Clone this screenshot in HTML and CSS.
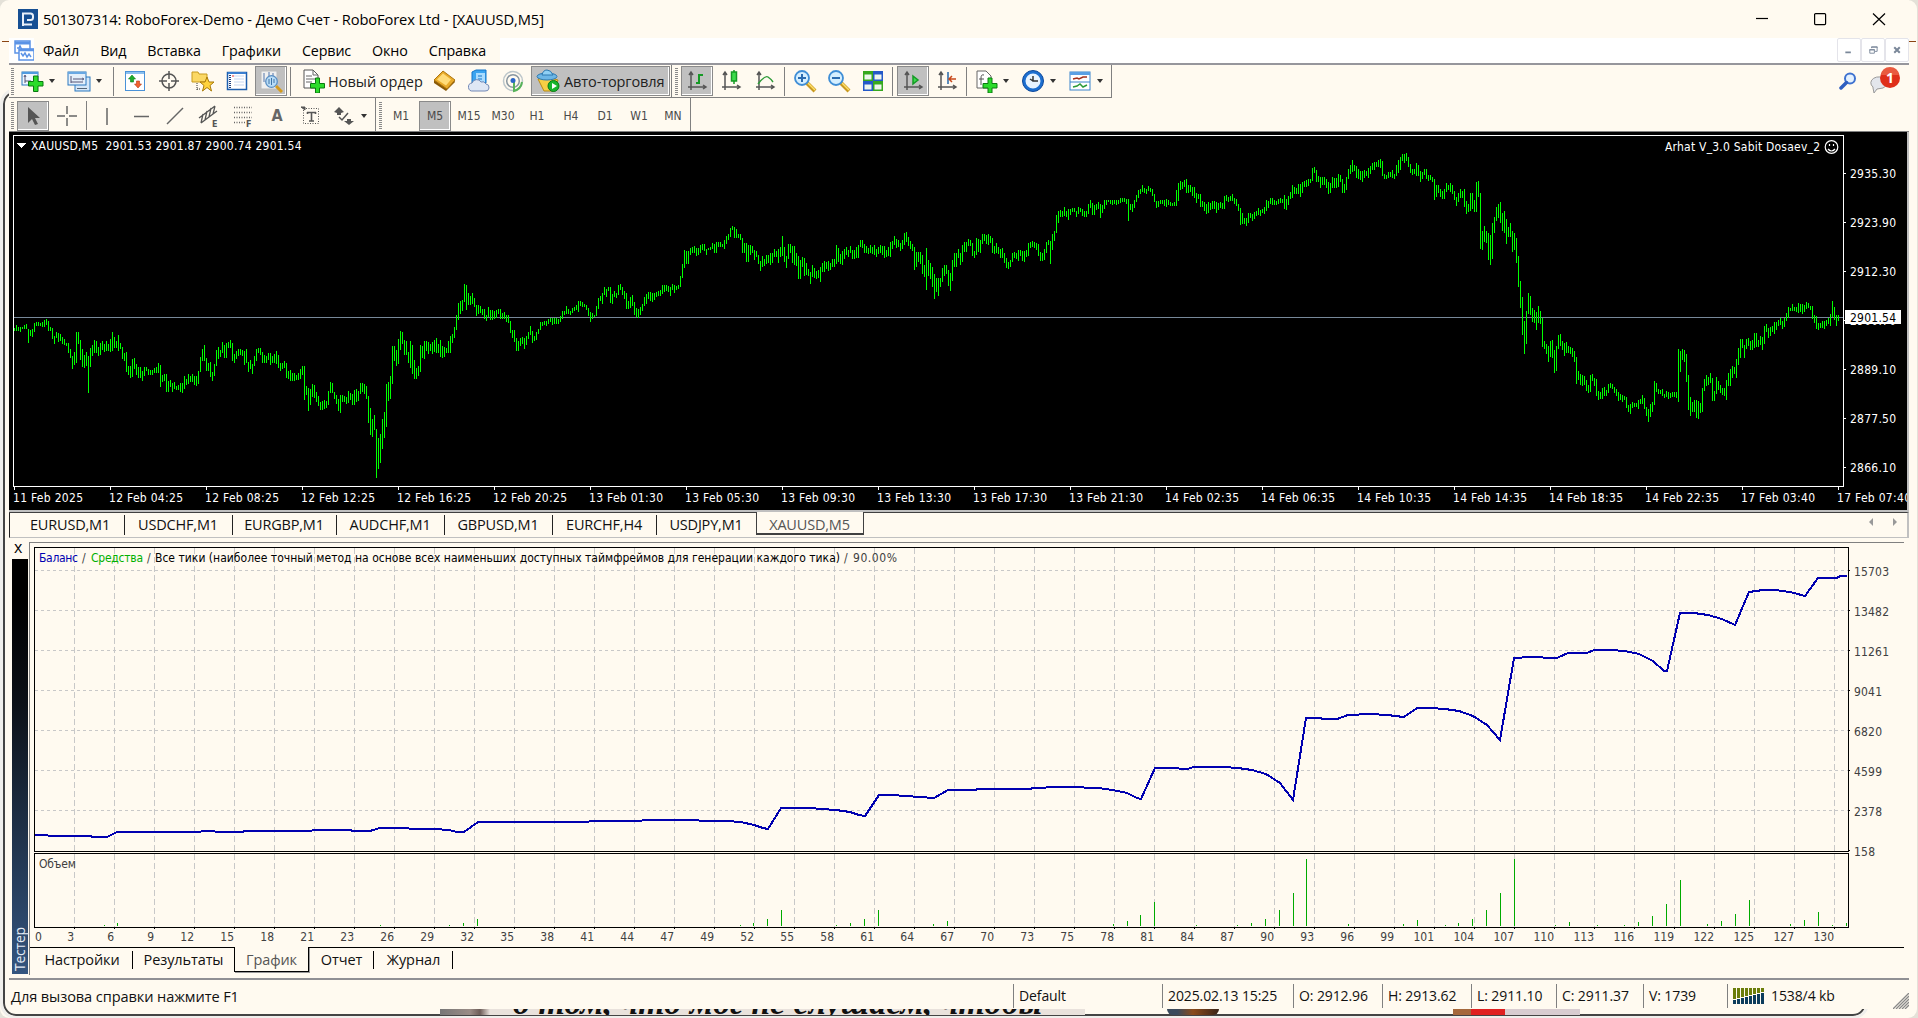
FILE: index.html
```html
<!DOCTYPE html>
<html lang="ru">
<head>
    <meta charset="UTF-8">
    <title>501307314: RoboForex-Demo - Демо Счет</title>
    <link rel="stylesheet" href="styles.css">
</head>
<body>
    <div class="screen">
        <div class="backdrop"></div>
        <div class="window">
            <!-- title bar -->
            <div class="titlebar">
                <svg class="logo" width="20" height="20" viewBox="0 0 20 20"><rect width="20" height="20" fill="#164f93"/><path d="M5 17V4.500h7.500q2.500 0 2.500 2.500v1.500q0 2.500-2.500 2.500H9M5 15.500h9" fill="none" stroke="#e8f0fa" stroke-width="2"/></svg>
                <span class="title-text">501307314: RoboForex-Demo - Демо Счет - RoboForex Ltd - [XAUUSD,M5]</span>
                <svg class="win-controls" width="130" height="14" viewBox="0 0 130 14" fill="none" stroke="#000" stroke-width="1.2"><path d="M0 6.5h12"/><rect x="58.6" y="1.6" width="11" height="11" rx="1"/><path d="M117 1.500l12 11.500M129 1.500L117 13"/></svg>
            </div>

            <!-- menu -->
            <div class="menubar">
                <svg class="menu-icon" width="21" height="21" viewBox="0 0 21 21" fill="#fff" stroke="#5b93e6" stroke-width="1.500"><rect x="1" y="1" width="15" height="12"/><path d="M1 3h15" stroke-width="3"/><path d="M3 8h2l1-2 2 4" /><rect x="5" y="9" width="15" height="11"/><path d="M5 10h15" stroke-width="2.500"/><path d="M7 13l2 3 2-3 2 4 2-3 2 3"/></svg>
                <div class="menu">
                    <span>Файл</span><span>Вид</span><span>Вставка</span><span>Графики</span><span>Сервис</span><span>Окно</span><span>Справка</span>
                </div>
                <div class="mdi">
                    <svg width="24" height="24" viewBox="0 0 24 24"><path d="M8 14.500h6" stroke="#7a8799" stroke-width="2"/></svg>
                    <svg width="24" height="24" viewBox="0 0 24 24" fill="none" stroke="#7a8799"><path d="M10.500 10V8.500h6v5H14M10 9h7M8.500 11.500h5v4h-5zM8 12h6"/></svg>
                    <svg width="24" height="24" viewBox="0 0 24 24"><path d="M9 9l6 6M15 9l-6 6" stroke="#7a8799" stroke-width="2.200"/></svg>
                </div>
            </div>

            <!-- standard toolbar -->
            <div class="toolbar">
                <div class="group">
                    <i class="grip"></i>
                    <div class="tool drop"><svg viewBox="0 0 24 24"><rect x="2" y="3" width="16" height="13" fill="#eef6ff" stroke="#2a78c0"/><path d="M2 4h16" stroke="#4f9be0" stroke-width="2"/><path d="M5 7v7M5 12h6M4 8l1-2 1 2" stroke="#557" fill="none"/><path d="M13.500 7h4.500v5.500h5v4.500h-5v5.500h-4.500V17h-5v-4.500h5z" fill="#2bdb2b" stroke="#0a7a10"/></svg><b></b></div>
                    <div class="tool drop"><svg viewBox="0 0 24 24"><rect x="8" y="8" width="15" height="14" fill="#d5e7f8" stroke="#2a78c0"/><path d="M10 19.500h10" stroke="#567"/><rect x="1" y="3" width="18" height="13" fill="#e4effa" stroke="#2a78c0"/><path d="M1 4h18" stroke="#69a8e2" stroke-width="2"/><path d="M4 7v7M4 13h12M6 10h9M15 9l2 1-2 1" stroke="#557" fill="none"/></svg><b></b></div>
                    <i class="sep first"></i>
                    <div class="tool"><svg viewBox="0 0 24 24"><rect x="2.500" y="2.500" width="19" height="19" fill="#fff" stroke="#4a92d8"/><path d="M3 4h18" stroke="#8cc0ef" stroke-width="2"/><path d="M9 6l3.500 4h-2v3h-3v-3h-2z" fill="#1cae2c" stroke="#0a7a1a" stroke-width=".6"/><path d="M15 19l3.500-4h-2v-3h-3v3h-2z" fill="#f2622e" stroke="#b73a12" stroke-width=".6"/></svg></div>
                    <div class="tool"><svg viewBox="0 0 24 24" fill="none" stroke="#555" stroke-width="1.500"><circle cx="12" cy="12" r="7"/><path d="M12 2v8M12 14v8M2 12h8M14 12h8"/></svg></div>
                    <div class="tool"><svg viewBox="0 0 24 24"><path d="M1 3h6l1 2h8v8H1z" fill="#fbd864" stroke="#c79a1e"/><path d="M6 14v7M6 20h4" stroke="#333" stroke-dasharray="1 1"/><path d="M16 8l2 5h5l-4 3.500 1.500 5.500-4.500-3.500-4.500 3.500 1.500-5.500-4-3.500h5z" fill="#ffd23c" stroke="#a87908"/></svg></div>
                    <div class="tool"><svg viewBox="0 0 24 24"><rect x="2.500" y="3.500" width="19" height="17" fill="#fff" stroke="#1e5fae" stroke-width="1.500"/><path d="M3 4h18" stroke="#3a7fd0" stroke-width="2"/><path d="M5 6v13" stroke="#1f3f7c" stroke-width="2" stroke-dasharray="1 1"/><path d="M9 7h10M9 10h10M9 13h10M9 16h10" stroke="#c7d7f0"/><path d="M7 7h2" stroke="#e33"/></svg></div>
                    <div class="tool on"><svg viewBox="0 0 24 24"><rect x="2" y="2" width="16" height="18" fill="#f0f0f0" stroke="#bbb"/><path d="M5 4v9M10 3v8M14 4v6" stroke="#57a"/><circle cx="12.500" cy="12.500" r="5.800" fill="#b9dcf6" stroke="#5a8fc4" stroke-width="1.300"/><path d="M10 15v-5M12.500 16V9M15 14v-4" stroke="#3d74a8"/><path d="M17 17l6 6" stroke="#d59b1d" stroke-width="3"/></svg></div>
                    <i class="sep"></i>
                    <div class="tool wide order"><svg viewBox="0 0 24 24"><path d="M2 1h9l5 5v13H2z" fill="#fff" stroke="#555"/><path d="M11 1v5h5M4 7h6M4 10h9M4 13h6" stroke="#666" fill="none"/><path d="M13.500 9h4v5.500h5v4.500h-5v5h-4v-5h-5v-4.500h5z" fill="#2bdb2b" stroke="#0a7a10"/></svg>Новый ордер</div>
                    <div class="tool"><svg viewBox="0 0 24 24"><path d="M1 11v3l12 8 9-9-1-2z" fill="#8a5a06"/><path d="M1 11l9-9 12 9-8 9z" fill="#e9ab2a" stroke="#ad750f"/><path d="M4 10.500l6-6 8 6-5 6z" fill="#ffdc7a"/></svg></div>
                    <div class="tool"><svg viewBox="0 0 24 24"><path d="M5 3l4-2h10v13H5z" fill="#3aa4f0" stroke="#1474c8"/><path d="M9 4h9v9H9z" fill="#a9dcff"/><path d="M11 7h4M11 10h4" stroke="#1474c8"/><path d="M6 22a4 4 0 01-1-8 5 5 0 019-1 4 4 0 015 2 3.500 3.500 0 01-1 7z" fill="#dfe7f5" stroke="#7288b5"/></svg></div>
                    <div class="tool"><svg viewBox="0 0 24 24" fill="none"><circle cx="12" cy="12" r="9.500" stroke="#bcc6ca" stroke-width="1.500"/><circle cx="12" cy="12" r="6.300" stroke="#8795a0" stroke-width="1.500"/><path d="M13 12v10q7-2 8-9" stroke="#57b35a" stroke-width="2"/><circle cx="12" cy="11.500" r="2.500" fill="#2b66c8"/></svg></div>
                    <div class="tool wide auto on"><svg viewBox="0 0 24 24"><path d="M2 10l10-2 10 3-4 11H8z" fill="#f8cf45" stroke="#b98b14"/><ellipse cx="11" cy="7.500" rx="10" ry="3.500" fill="#6cb6e6" stroke="#2c78b0"/><path d="M6 6q1-5 5-5t6 5z" fill="#8fd0f4" stroke="#2c78b0"/><circle cx="17.500" cy="17" r="5.500" fill="#18b52b" stroke="#0a7a18"/><path d="M16 14l5 3-5 3z" fill="#fff"/></svg>Авто-торговля</div>
                </div>
                <div class="group">
                    <i class="grip"></i>
                    <div class="tool on"><svg viewBox="0 0 24 24" fill="none" stroke="#555" stroke-width="1.500"><path d="M6 3v18M3 18h18M4 6l2-3 2 3M18 16l3 2-3 2"/><path d="M14 5v10M11 14h3M14 6h4" stroke="#159a25" stroke-width="2"/></svg></div>
                    <div class="tool"><svg viewBox="0 0 24 24" fill="none" stroke="#555" stroke-width="1.500"><path d="M6 3v18M3 18h18M4 6l2-3 2 3M18 16l3 2-3 2"/><path d="M15 1v14" stroke="#159a25"/><rect x="12.500" y="3" width="5" height="9" fill="#3bdc4c" stroke="#159a25"/></svg></div>
                    <div class="tool"><svg viewBox="0 0 24 24" fill="none" stroke="#555" stroke-width="1.500"><path d="M6 3v18M3 18h18M4 6l2-3 2 3M18 16l3 2-3 2"/><path d="M5 15q7-9 10-7t5 5" stroke="#2d9a38"/></svg></div>
                    <i class="sep"></i>
                    <div class="tool"><svg viewBox="0 0 24 24"><path d="M14 14l8 8" stroke="#c99a20" stroke-width="4"/><path d="M15 14l7 7" stroke="#ffdf6a" stroke-width="1.500"/><circle cx="9" cy="9" r="7" fill="#d5efff" stroke="#3f8ed6" stroke-width="1.800"/><path d="M5 9h8M9 5v8" stroke="#2b6cb0" stroke-width="2"/></svg></div>
                    <div class="tool"><svg viewBox="0 0 24 24"><path d="M14 14l8 8" stroke="#c99a20" stroke-width="4"/><path d="M15 14l7 7" stroke="#ffdf6a" stroke-width="1.500"/><circle cx="9" cy="9" r="7" fill="#d5efff" stroke="#3f8ed6" stroke-width="1.800"/><path d="M5 9h8" stroke="#2b6cb0" stroke-width="2"/></svg></div>
                    <div class="tool"><svg viewBox="0 0 24 24"><path d="M2 2h10v10H2zM12 12h10v10H12z" fill="#36a81e"/><path d="M12 2h10v10H12zM2 12h10v10H2z" fill="#2459c8"/><path d="M3.500 5.500h7v5h-7zM13.500 5.500h7v5h-7zM3.500 15.500h7v5h-7zM13.500 15.500h7v5h-7z" fill="#eef6ee"/></svg></div>
                    <i class="sep"></i>
                    <div class="tool on"><svg viewBox="0 0 24 24" fill="none" stroke="#555" stroke-width="1.500"><path d="M6 3v18M3 18h18M4 6l2-3 2 3M18 16l3 2-3 2"/><path d="M12 7l5 4-5 4z" fill="#3bdc4c" stroke="#159a25"/></svg></div>
                    <div class="tool"><svg viewBox="0 0 24 24" fill="none" stroke="#555" stroke-width="1.500"><path d="M6 3v18M3 18h18M4 6l2-3 2 3M18 16l3 2-3 2"/><path d="M13 3v12" stroke="#2466a8"/><path d="M21 10h-6M17 7l-3 3 3 3" stroke="#c8481a"/></svg></div>
                    <i class="sep"></i>
                    <div class="tool drop"><svg viewBox="0 0 24 24"><path d="M3 2h9l5 5v12H3z" fill="#fff" stroke="#666"/><path d="M10 6q-3-1-3 3v7M5 10h5" stroke="#555" fill="none"/><path d="M14 9h4v5.500h5v4.500h-5v5h-4v-5H9v-4.500h5z" fill="#2bdb2b" stroke="#0a7a10"/></svg><b></b></div>
                    <div class="tool drop"><svg viewBox="0 0 24 24"><circle cx="12" cy="12" r="9" fill="#e9f4ff" stroke="#1d6fd0" stroke-width="3"/><circle cx="12" cy="12" r="10.500" fill="none" stroke="#0f4a9c"/><path d="M12 7v5h5M12 12l-3-2" stroke="#333" stroke-width="1.500" fill="none"/></svg><b></b></div>
                    <div class="tool drop"><svg viewBox="0 0 24 24"><rect x="2" y="3" width="20" height="18" fill="#fff" stroke="#3a84cc"/><path d="M2 4.500h20" stroke="#5aa0e4" stroke-width="3"/><path d="M2 13h20" stroke="#3a84cc"/><path d="M5 10l4-1 2 1 4-2 4 0" stroke="#a3301c" fill="none" stroke-width="1.500"/><path d="M5 18l4-1 3-2 3 3 4-2" stroke="#2b9a38" fill="none" stroke-width="1.500"/></svg><b></b></div>
                </div>
                <div class="right-tools">
                    <svg width="18" height="18" viewBox="0 0 18 18"><circle cx="11" cy="6.500" r="5" fill="#e4f1ff" stroke="#3f72d0" stroke-width="2"/><path d="M7.500 10.500L2 16" stroke="#2f5fc0" stroke-width="3.500" stroke-linecap="round"/></svg>
                    <svg width="32" height="28" viewBox="0 0 32 28"><path d="M4 20a8 6 0 1110 1l-6 1-3 4-1-5z" fill="#e3e6ec" stroke="#999"/><circle cx="21" cy="11" r="10" fill="#df2f1a"/><path d="M12 8a9 8 0 0118 0z" fill="#e95a40"/><text x="21" y="16" text-anchor="middle" class="badge">1</text></svg>
                </div>
            </div>

            <!-- line studies toolbar -->
            <div class="toolbar second">
                <div class="group">
                    <i class="grip"></i>
                    <div class="tool on"><svg viewBox="0 0 24 24"><path d="M7 3v16l4-4 3 6 3-1-3-6h5z" fill="#555"/></svg></div>
                    <div class="tool"><svg viewBox="0 0 24 24" stroke="#666" stroke-width="1.500"><path d="M12 2v8M12 14v8M2 12h8M14 12h8"/></svg></div>
                    <i class="sep"></i>
                    <div class="tool"><svg viewBox="0 0 24 24" stroke="#666" stroke-width="1.500"><path d="M12 4v17"/></svg></div>
                    <div class="tool"><svg viewBox="0 0 24 24" stroke="#666" stroke-width="1.500"><path d="M5 12.500h15"/></svg></div>
                    <div class="tool"><svg viewBox="0 0 24 24" stroke="#666" stroke-width="1.500"><path d="M4 20L20 4"/></svg></div>
                    <div class="tool"><svg viewBox="0 0 24 24" stroke="#555" fill="none" stroke-width="1.300"><path d="M2 14L18 2M4 19L20 7M6 10l-2 9M10 7l-2 9M14 4l-2 9M18 2l-2 8"/><text x="15" y="23" class="mini">E</text></svg></div>
                    <div class="tool"><svg viewBox="0 0 24 24" stroke="#666" fill="none" stroke-width="1.300"><path d="M3 3.500h18M3 8.500h18M3 13.500h18M3 18.500h12" stroke-dasharray="1 1.500"/><text x="15" y="23" class="mini">F</text></svg></div>
                    <div class="tool letter">A</div>
                    <div class="tool"><svg viewBox="0 0 24 24" stroke="#555" fill="none"><rect x="4.500" y="4.500" width="15" height="15" stroke-dasharray="1 1.500"/><path d="M8 8.500h9M12.500 8v9M10 17h5M8.500 8v2M16.500 8v2" stroke-width="1.600"/><path d="M2 3h4v3z" fill="#555"/></svg></div>
                    <div class="tool drop"><svg viewBox="0 0 24 24" fill="#555"><path d="M7 3l5 5-3 1v2H5V9L2 8zM17 21l-5-4h3v-2h4v2h3z"/><path d="M7 13l3 3 6-7" fill="none" stroke="#555" stroke-width="1.500"/></svg><b></b></div>
                </div>
                <div class="group periods">
                    <i class="grip"></i>
                    <span>M1</span><span class="on">M5</span><span>M15</span><span>M30</span><span>H1</span><span>H4</span><span>D1</span><span>W1</span><span>MN</span>
                </div>
            </div>

            <!-- price chart -->
            <div class="chart">
                <svg id="price" width="1897" height="378" viewBox="10 132 1897 378" shape-rendering="crispEdges"></svg>
            </div>

            <div class="chart-tabs">
                <span class="w108">EURUSD,M1</span><span class="w108">USDCHF,M1</span><span class="w104">EURGBP,M1</span><span class="w108">AUDCHF,M1</span><span class="w108">GBPUSD,M1</span><span class="w104">EURCHF,H4</span><span class="w100">USDJPY,M1</span><span class="active">XAUUSD,M5</span>
                <svg class="arrows" width="32" height="10" viewBox="0 0 32 10" fill="#999"><path d="M5 1v8L1 5zM25 1v8l4-4z"/></svg>
            </div>

            <!-- strategy tester -->
            <div class="tester">
                <div class="side">
                    <div class="close">x</div>
                    <div class="strip"><span>Тестер</span></div>
                </div>
                <div class="tester-main">
                    <svg id="balance" width="1874" height="404" viewBox="30 543 1874 404" shape-rendering="crispEdges"></svg>
                    <div class="tester-tabs">
                        <span class="t1">Настройки</span><span class="t2">Результаты</span><span class="t3">График</span><span class="t4">Отчет</span><span class="t5">Журнал</span><i></i>
                    </div>
                </div>
            </div>

            <div class="status">
                <span class="help">Для вызова справки нажмите F1</span>
                <span class="profile">Default</span>
                <span class="date">2025.02.13 15:25</span>
                <span class="o">O: 2912.96</span>
                <span class="h">H: 2913.62</span>
                <span class="l">L: 2911.10</span>
                <span class="c">C: 2911.37</span>
                <span class="v">V: 1739</span>
                <span class="net"><svg width="32" height="18" viewBox="0 0 32 18" id="signal"></svg>1538/4 kb</span>
                <svg class="resize" width="16" height="16" viewBox="0 0 16 16" stroke="#888" stroke-width="1.300"><path d="M0 16L16 0M3 16L16 3M6 16L16 6M9 16l7-7M12 16l4-4"/></svg>
            </div>
        </div>
        <div class="under">
            <div class="caption"><span>о том, что мог не слушаем, чтобы</span></div>
            <div class="photo one"></div>
            <div class="photo two"></div>
        </div>
    </div>
    <script src="charts.js"></script>
</body>
</html>
```
FILE: styles.css
```css
* {
    box-sizing: border-box;
}

html {
    background: #e4e1d8;
}

body {
    margin: 0;
    width: 1918px;
    height: 1018px;
    overflow: hidden;
    font-family: "Open Sans", "Noto Sans", sans-serif;
    font-size: 14px;
    color: #1a1a1a;
}

.screen {
    position: relative;
    width: 1917px;
    height: 1018px;
    background: #fffaf0;
    border-radius: 9px;
    overflow: hidden;
}

/* frame of the window lying underneath */
.backdrop {
    position: absolute;
    left: 3px;
    top: 91px;
    width: 1863px;
    height: 925px;
    border: 2px solid #444;
    border-radius: 13px;
    outline: 3px solid #f0efec;
}

.window {
    position: relative;
    width: 1900px;
    height: 1009px;
    margin-left: 9px;
    background: #fffaf0;
    display: flex;
    flex-direction: column;
}

/* thin marks on both sides of the menu */
.window::before,
.window::after {
    content: "";
    position: absolute;
    top: 41px;
    left: -7px;
    width: 7px;
    height: 1px;
    background: #8b4513;
}

.window::after {
    left: 1900px;
}

/* title */
.titlebar {
    height: 38px;
    flex: none;
    display: flex;
    align-items: center;
    padding-left: 9px;
}

.title-text {
    margin: -1px 0 0 5px;
    font-size: 14.700px;
    color: #000;
    white-space: nowrap;
    letter-spacing: -0.11px;
}

.win-controls {
    margin-left: auto;
    margin-right: 23px;
}

/* menu */
.menubar {
    height: 27px;
    flex: none;
    display: flex;
    background: #fff;
    border-bottom: 2px solid #96969c;
}

.menu-icon {
    margin: 2px 0 0 5px;
}

.menu {
    width: 466px;
    margin-left: -1px;
    padding-left: 9px;
    background: #fffaf0;
    display: flex;
    align-items: center;
    gap: 21px;
    font-size: 14.300px;
    color: #000;
    letter-spacing: -0.12px;
}

.mdi {
    margin-left: auto;
    display: flex;
}

.mdi svg {
    border: 1px solid #e4e4ea;
    border-radius: 2px;
}

/* toolbars */
.toolbar {
    height: 33px;
    flex: none;
    display: flex;
}

.toolbar.second {
    height: 34px;
    border-bottom: 1px solid #808080;
}

.group {
    display: flex;
    align-items: center;
    height: 33px;
    padding-left: 2px;
    border-right: 1px solid #808080;
    border-bottom: 1px solid #808080;
}

.group + .group {
    padding-left: 3px;
}

.second .group {
    padding-top: 2px;
    border-bottom: none;
}

.grip {
    width: 3px;
    height: 27px;
    margin-right: 2px;
    background: repeating-linear-gradient(#8a8a8a 0 1px, transparent 1px 2px);
}

.sep {
    width: 1px;
    height: 29px;
    margin: 0 3px 0 2px;
    background: #808080;
}

.sep.first {
    margin: 0 4px 0 3px;
}

.tool {
    width: 34px;
    height: 30px;
    flex: none;
    display: flex;
    align-items: center;
    justify-content: center;
}

.tool svg {
    width: 24px;
    height: 24px;
    flex: none;
}

.tool.drop {
    width: 47px;
    justify-content: flex-start;
    padding-left: 4px;
}

.tool.drop b {
    margin-left: 5px;
    border: 3.500px solid transparent;
    border-top: 4px solid #333;
    border-bottom: none;
}

.tool.on {
    width: 32px;
    margin: 0 1px;
    background: #c0c0c0;
    border: 1px solid #8a8a8a;
    box-shadow: inset -1px -1px #fff;
}

.tool.wide {
    justify-content: flex-start;
    color: #222;
    white-space: nowrap;
}

.tool.order {
    width: 134px;
    padding-left: 8px;
    gap: 2px;
    font-size: 14.500px;
}

.tool.auto {
    width: 139px;
    margin: 0 1px;
    padding-left: 4px;
    gap: 4px;
    font-size: 14.500px;
    letter-spacing: -0.1px;
}

.tool.letter {
    font: bold 16px "DejaVu Sans Condensed", sans-serif;
    color: #666;
}

.mini {
    font: bold 8px "DejaVu Sans", sans-serif;
    fill: #555;
    stroke: none;
}

.periods span {
    width: 34px;
    height: 30px;
    line-height: 30px;
    text-align: center;
    font-family: "DejaVu Sans Condensed", sans-serif;
    font-size: 12px;
    color: #4a4a4a;
}

.periods .on {
    width: 32px;
    margin: 0 1px;
    line-height: 28px;
    background: #c0c0c0;
    border: 1px solid #8a8a8a;
    box-shadow: inset -1px -1px #fff;
}

.right-tools {
    margin-left: auto;
    padding: 2px 8px 0 0;
    display: flex;
    align-items: flex-start;
}

.right-tools svg:first-child {
    margin: 5px 12px 0 0;
}

.badge {
    font: bold 14px "Open Sans", sans-serif;
    fill: #fff;
}

/* price chart */
.chart {
    height: 381px;
    flex: none;
    padding-left: 1px;
    border-right: 2px solid #c0c0c0;
    border-bottom: 1px solid #404040;
    background: linear-gradient(#000 378px, #c0c0c0 378px);
}

.chart svg {
    display: block;
}

.chart text {
    font-family: "DejaVu Sans Condensed", sans-serif;
    font-size: 12px;
    fill: #fff;
}

.chart .now {
    fill: #000;
}

/* chart tabs */
.chart-tabs {
    height: 25px;
    flex: none;
    display: flex;
    padding-left: 7px;
    border-left: 1px solid #222;
    border-right: 2px solid #c0c0c0;
    border-bottom: 1px solid #c0c0c0;
    font-size: 14.500px;
    letter-spacing: -0.18px;
}

.chart-tabs span {
    height: 20px;
    line-height: 19px;
    margin-top: 2px;
    padding-right: 1px;
    text-align: center;
    border-right: 1px solid #222;
    color: #111;
}

.w108 {
    width: 108px;
}

.w104 {
    width: 104px;
}

.w100 {
    width: 100px;
}

.chart-tabs .active {
    width: 108px;
    height: 23px;
    margin: -1px 0 0 -1px;
    line-height: 25px;
    color: #555;
    background: #fffaf0;
    border: 1px solid #404040;
    border-top: none;
    border-bottom-width: 2px;
}

.arrows {
    margin: 4px 7px 0 auto;
}

/* tester */
.tester {
    height: 440px;
    flex: none;
    display: flex;
    padding-top: 4px;
}

.side {
    width: 20px;
    padding: 0 1px 4px 3px;
}

.close {
    height: 17px;
    line-height: 11px;
    padding-left: 2px;
    font-size: 16px;
    color: #000;
}

.strip {
    width: 16px;
    height: 415px;
    display: flex;
    align-items: flex-end;
    background: linear-gradient(#000 10%, #0c1118 35%, #34557f);
}

.strip span {
    writing-mode: vertical-rl;
    transform: rotate(180deg);
    line-height: 16px;
    padding-top: 3px;
    font-size: 14px;
    color: #e4ebf5;
    letter-spacing: -0.2px;
}

.tester-main {
    width: 1875px;
    height: 433px;
    border-left: 1px solid #808080;
    border-top: 1px solid #808080;
}

.tester-main > svg {
    display: block;
}

.tester-main text {
    font-family: "DejaVu Sans Condensed", sans-serif;
    font-size: 12px;
    fill: #404040;
}

.tester-tabs {
    height: 26px;
    display: flex;
    color: #111;
    font-size: 14.500px;
    letter-spacing: -0.1px;
}

.tester-tabs span,
.tester-tabs i {
    text-align: center;
    line-height: 24px;
    border-top: 1px solid #000;
    background: linear-gradient(#000, #000) right 3px / 1px 18px no-repeat;
}

.tester-tabs .t1 {
    width: 103px;
    padding-left: 1px;
}

.tester-tabs .t2 {
    width: 101px;
    background: none;
}

.tester-tabs .t3 {
    width: 75px;
    height: 25px;
    line-height: 26px;
    color: #555;
    background: none;
    border: 1px solid #000;
    border-top: none;
    box-shadow: 1px 1px #999;
}

.tester-tabs .t4 {
    width: 65px;
}

.tester-tabs .t5 {
    width: 79px;
}

.tester-tabs i {
    flex: 1;
    background: none;
}

/* status bar */
.status {
    height: 31px;
    flex: none;
    display: flex;
    align-items: center;
    padding-top: 2px;
    border-top: 2px solid #909094;
    color: #111;
    letter-spacing: -0.1px;
}

.status span {
    height: 24px;
    line-height: 24px;
    padding-left: 5px;
    border-left: 1px solid #808080;
    white-space: nowrap;
}

.status .help {
    width: 1004px;
    padding-left: 2px;
    border: none;
    font-size: 14.600px;
}

.status .profile {
    width: 149px;
}

.status .date {
    width: 131px;
}

.status .o,
.status .h {
    width: 89px;
}

.status .l {
    width: 85px;
}

.status .c {
    width: 87px;
}

.status .v {
    width: 84px;
}

.status .net {
    display: flex;
    align-items: center;
    gap: 6px;
}

.resize {
    margin: 10px 0 0 auto;
}

/* strip of the page seen below the window */
.under {
    position: relative;
    display: flex;
    height: 6px;
    padding-left: 440px;
}

.caption {
    width: 645px;
    height: 6px;
    overflow: hidden;
    padding-left: 73px;
    background: linear-gradient(90deg, #777 0, #9a8c86 30px, #6d5d58 40px, #e9e2dc 50px);
}

.caption span {
    display: block;
    margin-top: -24px;
    font: italic bold 34px/36px "Liberation Serif", serif;
    color: #111;
    white-space: nowrap;
}

.photo {
    height: 6px;
}

.photo.one {
    width: 52px;
    margin-left: 82px;
    border-radius: 0 0 26px 26px;
    background: linear-gradient(90deg, #3b4a5c 20%, #8a4b1c 50%, #3a2317);
}

.photo.two {
    width: 127px;
    margin-left: 234px;
    background: linear-gradient(90deg, #a5683c 18px, #e02020 18px 52px, #d8ccd0 52px);
}
```
FILE: charts.js
```js
const NS = 'http://www.w3.org/2000/svg';

function add(parent, tag, attrs, text) {
    const el = document.createElementNS(NS, tag);
    for (const key in attrs) el.setAttribute(key, attrs[key]);
    if (text) el.textContent = text;
    parent.appendChild(el);
    return el;
}

// bar ranges: position, high, low
const parts = [
    { x0: 0, scale: 2.45, from: 14, to: 638, bars: `35 594 602,40 584 602,45 590 602,50 592 606,55 590 598,60 586 596,65 582 596,69 598 638,74 600 618,80 598 622,85 578 606,90 576 588,95 576 588,100 579 588,105 576 590,109 570 590,113 566 584,119 572 602,124 590 602,129 594 626,133 618 642,138 606 624,143 608 636,148 612 632,153 620 642,158 626 646,163 640 648,168 640 668,172 656 684,177 678 716,182 666 705,187 606 698,192 606 642,197 630 690,202 656 710,207 674 714,212 666 708,217 678 788,221 654 710,226 644 678,231 630 668,236 633 668,241 650 678,246 640 674,251 634 660,256 642 666,261 632 662,266 642 662,270 626 666,275 606 662,280 622 654,285 632 654,290 615 662,295 640 658,300 650 686,305 670 692,310 666 725,315 708 735,320 708 744,324 686 741,329 684 717,334 702 735,339 710 744,344 711 744,349 722 752,354 711 738,359 711 723,364 717 735,368 720 735,373 719 735,378 713 728,383 711 728,388 699 728,393 705 770,398 735 755,403 732 752,408 732 786,413 752 785,417 750 770,422 758 785,427 756 776,432 768 780,437 766 780,442 759 785,447 758 789,452 738 776,457 746 766,462 732 762,467 738 755,471 732 755,476 738 765,481 738 768,486 722 762,491 681 726,496 656 692,501 645 692,506 684 722,511 699 722,515 696 740,520 726 752,525 702 738,530 660 708,535 652 686,540 660 682,545 636 670,550 645 684,555 640 684,560 636 655,565 630 655,570 640 692,574 672 698,579 662 686,584 656 678,589 658 676,594 660 678,599 662 704,604 657 698,609 696 726,613 690 718,618 702 732,623 678 708,628 657 692,633 654 668,638 654 674,643 666 698,648 675 698,653 678 698,658 668 690,663 670 704,668 678 698,673 672 698,678 663 702,683 675 714,688 698 722,693 699 718,697 692 714,702 699 744,707 722 746,712 720 752,717 728 754,722 729 752,727 735 750,732 729 750,737 717 746,741 708 735,746 708 810,751 768 795,756 774 842,761 776 825,765 762 801,770 765 804,775 786 815,780 798 828,785 816 840,790 812 840,795 810 836,800 812 834,805 783 825,810 756 788,815 760 788,820 786 806,825 795 822,829 808 842,834 795 849,839 795 815,844 798 816,849 801 822,854 783 818,859 789 810,863 792 824,868 780 824,873 777 815,878 783 812,883 759 792,888 760 786,893 762 792,898 768 806,903 798 878,908 834 914,912 866 920,917 855 900,922 897 1043,927 924 1016,932 912 998,937 867 956,942 846 924,947 762 890,952 756 812,956 738 806,961 648 762,966 648 692,971 660 708,976 627 702,981 603 660,986 606 642,991 630 676,996 633 675,1001 666 698,1006 633 714,1010 645 732,1015 690 746,1020 714 746,1025 708 738,1030 645 726,1035 648 684,1040 633 686,1045 633 662,1050 636 672,1055 642 664,1060 636 672,1065 630 666,1069 624 668,1074 642 668,1079 630 681,1084 648 684,1089 652 682,1094 654 670,1099 633 670,1104 618 668,1109 612 640,1114 591 624,1119 555 600,1124 520 570,1128 513 552,1133 510 542,1138 462 516,1143 465 540,1148 490 524,1153 498 524,1158 490 522,1162 504 530,1167 525 558,1172 525 552,1177 528 548,1182 537 556,1187 537 568,1192 555 573,1197 531 560,1202 540 570,1207 540 570,1212 543 568,1217 540 564,1222 537 552,1226 537 566,1231 549 566,1236 546 566,1241 555 576,1246 555 578,1251 573 608,1255 600 624,1260 600 636,1265 624 662,1270 632 662,1275 624 648,1280 621 642,1285 624 657,1290 618 644,1295 606 628,1300 588 615,1305 603 638,1310 618 632,1315 606 630,1320 597 612,1325 576 600,1330 576 588,1335 573 586,1340 573 588,1345 567 582,1350 564 576,1354 564 585,1359 564 582,1364 564 582,1369 567 582,1374 558 576,1379 543 568,1384 543 556,1388 528 552,1393 537 552,1398 543 555,1403 534 549,1408 530 543,1413 525 540,1418 513 546,1423 514 528,1428 516 530,1433 522 532,1438 525 540,1442 534 558,1447 546 576,1452 549 566,1457 555 562,1462 528 558,1467 504 536,1472 498 512,1477 489 521,1481 471 494,1486 477 500,1491 471 483,1496 471 518,1501 492 522,1506 483 500,1511 489 504,1516 465 496,1520 462 480,1525 471 494,1530 483 508,1535 489 537,1540 513 537,1545 501 534,1550 495 528,1555 516 555,1560 534 562,1565 537 564` },
    { x0: 640, scale: 2.45, from: 640, to: 1278, bars: `0 531 555,5 522 543,10 501 528,15 492 521,20 486 508,25 486 512,30 489 516,35 489 510,40 486 501,45 483 498,50 480 497,55 465 492,60 465 486,65 466 482,69 468 486,74 471 497,79 462 480,84 466 488,89 468 480,94 465 477,99 438 470,104 402 444,109 360 413,114 362 402,119 362 402,124 354 376,129 350 370,133 348 370,138 354 377,143 354 374,148 345 368,153 342 360,158 342 362,163 357 375,168 354 360,173 350 360,178 339 357,182 342 368,187 336 368,192 336 352,197 336 352,202 342 350,207 330 357,212 318 342,217 312 330,221 294 322,226 288 300,231 291 324,236 297 324,241 312 324,246 312 330,251 324 368,256 339 368,261 339 396,266 345 396,270 345 374,275 348 370,280 360 390,285 363 381,290 375 402,295 393 422,300 378 410,305 387 408,310 375 402,315 375 400,320 369 405,325 369 398,329 357 380,334 363 380,339 357 399,344 351 380,349 318 378,354 351 396,359 378 414,364 342 388,368 342 368,373 348 399,378 348 404,383 369 408,388 378 447,393 390 447,398 381 410,403 384 438,408 399 435,413 417 438,417 426 462,422 405 442,427 414 444,432 423 447,437 420 444,442 411 456,447 399 426,452 393 426,457 396 416,462 393 422,467 399 420,471 387 411,476 387 410,481 345 402,486 354 396,491 372 402,496 363 405,501 357 388,506 351 376,511 360 381,515 348 368,520 360 386,525 360 387,530 351 384,535 345 384,540 330 350,545 330 354,550 342 368,555 348 368,560 354 372,565 345 368,570 351 372,575 345 375,579 357 381,584 351 372,589 345 368,594 348 375,599 348 384,604 360 381,609 351 378,613 336 381,618 333 357,623 318 345,628 327 354,633 330 352,638 339 362,643 330 357,648 309 345,653 306 336,658 321 348,663 333 357,668 342 362,672 351 420,677 366 410,682 366 396,687 366 402,692 375 432,697 405 440,702 354 480,707 390 438,712 399 446,716 411 470,721 432 507,726 444 486,731 444 497,736 444 471,741 414 456,746 405 438,751 405 432,756 420 468,760 429 483,765 390 453,770 369 412,775 369 410,780 357 384,785 369 405,790 345 396,795 336 366,800 336 366,805 327 348,810 330 348,815 339 378,819 363 384,824 324 375,829 327 366,834 330 369,839 312 342,844 312 333,849 315 342,854 312 345,858 318 339,863 324 369,868 348 372,873 339 370,878 351 372,883 357 384,888 354 384,893 369 399,898 384 414,903 396 416,908 390 411,912 369 396,917 366 384,922 369 386,927 360 393,932 360 378,937 363 393,942 363 396,947 360 380,952 339 378,957 336 354,962 333 352,966 336 354,971 339 360,976 342 378,981 366 392,986 369 392,991 357 390,996 336 369,1001 330 345,1005 333 402,1010 312 360,1015 303 333,1020 255 309,1025 243 279,1030 240 260,1035 243 260,1040 231 258,1045 243 260,1050 237 270,1055 237 254,1060 234 246,1064 234 246,1069 243 261,1074 231 252,1079 234 246,1084 237 258,1089 243 262,1094 243 261,1099 222 252,1104 210 234,1108 219 254,1113 225 255,1118 222 240,1123 216 237,1128 222 264,1133 225 248,1138 210 236,1143 210 225,1148 210 216,1153 210 222,1157 210 225,1162 210 222,1167 210 224,1172 210 222,1177 204 218,1182 204 216,1187 204 216,1192 207 222,1197 207 273,1202 222 240,1207 222 246,1211 210 234,1216 195 216,1221 180 204,1226 177 192,1231 165 186,1236 174 188,1241 177 192,1246 168 184,1251 174 187,1256 177 198,1260 192 216,1265 213 234,1270 213 230,1275 210 222,1280 210 222,1285 210 228,1290 207 231,1295 210 226,1300 216 228,1305 219 228,1310 216 228,1314 180 228,1319 159 213,1324 153 180,1329 156 178,1334 150 172,1339 147 188,1344 165 190,1349 165 186,1354 171 198,1358 171 204,1363 189 219,1368 192 207,1373 192 230,1378 213 231,1383 216 243,1388 222 252,1393 216 249,1398 219 240,1403 213 236,1408 213 237,1412 216 248,1417 219 240,1422 216 234,1427 219 237,1432 198 237,1437 195 213,1442 201 216,1447 198 213,1452 192 213,1457 204 222,1462 207 228,1467 222 243,1471 234 285,1476 249 282,1481 264 282,1486 264 288,1491 249 280,1496 249 264,1501 252 273,1506 246 266,1511 243 258,1515 234 255,1520 240 258,1525 237 250,1530 231 252,1535 210 243,1540 213 234,1545 204 222,1550 204 225,1555 210 225,1560 213 225,1565 207 222` },
    { x0: 1280, scale: 2.4577, from: 1280, to: 1838, bars: `0 204 219,5 207 219,10 195 237,15 207 240,20 198 225,25 186 207,30 165 204,35 171 192,40 174 192,45 162 192,50 162 201,55 156 189,60 153 172,65 150 171,70 147 168,75 147 158,80 114 153,85 111 129,90 120 156,95 138 156,99 141 174,104 141 165,109 141 165,114 147 174,119 156 192,124 159 189,129 141 174,134 144 174,139 144 174,144 132 171,149 135 156,153 147 188,158 162 189,163 141 180,168 117 147,173 105 132,178 90 126,183 105 123,188 108 144,193 117 147,198 123 150,203 123 156,208 120 145,213 123 138,217 114 144,222 108 132,227 99 120,232 96 120,237 96 112,242 90 110,247 87 114,252 93 138,257 132 147,262 135 147,267 126 144,272 126 141,277 120 145,281 132 147,286 105 138,291 90 129,296 81 120,301 72 93,306 72 99,311 69 93,316 81 110,321 102 129,326 117 135,331 117 132,335 99 138,340 105 138,345 123 156,350 126 148,355 117 135,360 117 147,365 135 153,370 135 150,375 141 156,380 147 210,385 165 201,390 165 189,394 177 201,399 183 207,404 177 207,409 159 186,414 165 180,419 159 186,424 165 192,429 183 210,434 201 228,439 189 216,444 177 204,449 183 204,453 177 231,458 213 252,463 222 246,468 189 242,473 189 237,478 210 246,483 156 246,488 153 201,493 189 357,498 303 360,503 288 336,508 303 339,512 309 390,517 315 405,522 279 387,527 261 309,532 231 272,537 222 264,542 216 279,547 249 303,551 243 309,556 267 342,561 291 321,566 279 321,571 303 366,576 309 360,581 324 399,586 378 471,591 453 534,596 501 615,601 573 672,606 543 642,611 489 552,616 498 555,621 534 576,625 540 579,630 546 600,635 528 579,640 543 582,645 564 651,650 633 657,655 642 672,660 648 696,665 633 681,669 630 684,674 660 729,679 648 723,684 615 657,689 612 648,694 633 660,699 639 678,704 636 669,709 648 668,714 651 672,719 654 681,724 663 696,728 681 762,733 723 750,738 732 765,743 735 768,748 738 765,753 750 783,758 765 789,763 735 786,768 732 753,773 744 768,778 747 798,783 783 810,788 786 807,793 774 807,797 771 798,802 780 798,807 762 789,812 759 774,817 762 778,822 771 789,827 777 798,832 786 813,837 792 810,842 795 816,847 798 810,851 801 834,856 825 846,861 822 852,866 816 834,871 819 831,876 819 831,881 810 837,886 807 822,891 795 822,896 804 837,901 831 858,905 837 876,910 822 861,915 816 846,920 753 825,925 759 786,930 777 792,935 780 792,940 777 798,945 792 804,950 783 801,955 786 807,960 789 804,965 786 801,970 786 801,975 786 804,979 657 816,984 663 726,989 657 690,994 660 696,999 672 756,1004 735 840,1009 801 858,1014 816 846,1019 810 846,1024 810 864,1028 813 867,1033 819 849,1038 774 846,1043 747 783,1048 735 768,1053 741 765,1058 729 759,1063 744 813,1068 783 813,1073 741 792,1078 753 780,1082 765 789,1087 774 795,1092 774 798,1097 750 810,1102 729 768,1107 717 768,1112 708 744,1117 711 732,1122 687 744,1127 654 705,1132 627 684,1136 627 654,1141 645 684,1146 627 657,1151 624 648,1156 633 660,1161 630 660,1166 609 654,1171 609 651,1176 630 651,1181 618 645,1186 621 660,1190 588 642,1195 582 606,1200 594 624,1205 591 618,1210 588 606,1215 576 612,1220 576 600,1225 570 588,1230 564 585,1235 573 597,1240 564 591,1245 549 573,1250 531 564,1255 534 543,1259 522 543,1264 531 543,1269 531 546,1274 519 549,1279 522 546,1284 522 552,1289 525 546,1294 516 537,1299 519 534,1304 528 540,1309 528 567,1313 555 579,1318 558 597,1323 579 600,1328 579 594,1333 573 594,1338 573 597,1343 570 588,1348 564 582,1353 552 588,1358 513 561,1363 531 570,1367 555 588,1372 555 573` }
];

function drawPrice() {
    const svg = document.getElementById('price');
    add(svg, 'path', { d: 'M13.500 135.500H1843.500V486.500H13.500Z', fill: 'none', stroke: '#fff' });
    add(svg, 'path', { d: 'M14 317.500H1843', stroke: '#778899' });

    parts.forEach((part) => {
        const bars = part.bars.split(',').map((b) => b.split(' ').map(Number));
        for (let x = part.from; x <= part.to; x += 2) {
            const u = (x + 0.3 - part.x0) * part.scale;
            let near = bars[0];
            bars.forEach((b) => {
                if (Math.abs(b[0] - u) < Math.abs(near[0] - u)) near = b;
            });
            const top = Math.round(130 + near[1] / 3);
            const bottom = Math.round(130 + near[2] / 3);
            add(svg, 'rect', { x: x, y: top, width: 1, height: bottom - top, fill: '#00ff00' });
        }
    });

    // time scale, the last label runs out of the window
    const times = ['11 Feb 2025', '12 Feb 04:25', '12 Feb 08:25', '12 Feb 12:25', '12 Feb 16:25', '12 Feb 20:25',
        '13 Feb 01:30', '13 Feb 05:30', '13 Feb 09:30', '13 Feb 13:30', '13 Feb 17:30', '13 Feb 21:30',
        '14 Feb 02:35', '14 Feb 06:35', '14 Feb 10:35', '14 Feb 14:35', '14 Feb 18:35', '14 Feb 22:35',
        '17 Feb 03:40', '17 Feb 07:40'];
    times.forEach((t, i) => {
        const x = 14 + i * 96;
        add(svg, 'rect', { x: x, y: 486, width: 1, height: 4, fill: '#fff' });
        add(svg, 'text', { x: x - 1, y: 502, textLength: i ? 74 : 70 }, t);
    });

    // price scale
    ['2935.30', '2923.90', '2912.30', '2900.70', '2889.10', '2877.50', '2866.10'].forEach((p, i) => {
        const y = 173 + i * 49;
        add(svg, 'rect', { x: 1844, y: y, width: 2, height: 1, fill: '#fff' });
        add(svg, 'text', { x: 1850, y: y + 5, textLength: 46 }, p);
    });
    add(svg, 'rect', { x: 1845, y: 310, width: 56, height: 14, fill: '#fff' });
    add(svg, 'text', { x: 1850, y: 322, textLength: 46, class: 'now' }, '2901.54');

    add(svg, 'path', { d: 'M17 143H26L21.500 148Z', fill: '#fff' });
    add(svg, 'text', { x: 31, y: 150, textLength: 67 }, 'XAUUSD,M5');
    add(svg, 'text', { x: 105.5, y: 150, textLength: 196 }, '2901.53 2901.87 2900.74 2901.54');
    add(svg, 'text', { x: 1665, y: 151, textLength: 155 }, 'Arhat V_3.0 Sabit Dosaev_2');
    const face = add(svg, 'g', { fill: 'none', stroke: '#fff', 'shape-rendering': 'auto', 'stroke-width': 1.2 });
    add(face, 'circle', { cx: 1831.5, cy: 147, r: 6.3 });
    add(face, 'path', { d: 'M1828 149q3.500 4 7 0M1829.500 144v2M1833.500 144v2' });
}

function drawBalance() {
    const svg = document.getElementById('balance');

    // grid
    for (let y = 570; y <= 810; y += 40) {
        add(svg, 'path', { d: `M35 ${y + 0.5}H1848`, stroke: '#c8c8c8', 'stroke-dasharray': '3 3' });
    }
    for (let i = 1; i <= 45; i++) {
        const x = 34.5 + i * 40;
        add(svg, 'path', { d: `M${x} 548V851M${x} 854V927`, stroke: '#c8c8c8', 'stroke-dasharray': '6 3' });
        add(svg, 'rect', { x: x - 0.5, y: 927, width: 1, height: 2, fill: '#000' });
    }
    add(svg, 'path', { d: 'M34.500 547.500H1848.500V851.500H34.500ZM34.500 853.500H1848.500V927.500H34.500Z', fill: 'none', stroke: '#000' });

    const line = '35,835 46,835 50,836 90,836 93,837 107,837 117,832 200,832 202,831 214,831 216,832 242,832 245,831 311,831 313,830 350,830 353,831 370,831 380,828 407,828 411,829 434,829 449,830 457,832 464,832 478,822 588,822 590,821 640,821 644,820 698,820 700,821 726,821 741,822 754,825 763,828 768,829 781,808 809,808 836,810 850,812 859,815 865,816 879,795 892,795 920,797 934,798 948,790 975,790 978,789 1030,789 1033,788 1060,787 1070,787 1098,788 1113,790 1127,793 1137,798 1141,799 1155,768 1170,768 1187,769 1194,767 1223,767 1238,768 1252,770 1266,774 1280,783 1293,800 1306,718 1320,718 1323,719 1337,719 1348,715 1370,714 1388,715 1395,716 1404,717 1417,708 1431,708 1445,709 1459,711 1473,716 1487,725 1500,740 1514,658 1530,657 1541,657 1545,658 1557,658 1568,653 1587,653 1594,650 1610,650 1625,651 1639,654 1653,661 1664,671 1667,671 1680,613 1694,613 1708,615 1722,619 1735,625 1749,592 1763,590 1775,590 1790,592 1805,596 1818,578 1837,578 1840,576 1847,576';
    add(svg, 'polyline', { points: line, fill: 'none', stroke: '#0000b0', 'stroke-width': 2 });

    // volume: x, height
    [[104, 1], [117, 3], [380, 1], [449, 1], [463, 3], [477, 7], [740, 1], [753, 3], [767, 7], [781, 16], [836, 1], [850, 3],
        [864, 7], [878, 16], [933, 2], [947, 5], [1113, 2], [1127, 5], [1140, 11], [1154, 24], [1196, 1], [1237, 1], [1251, 3],
        [1265, 7], [1279, 16], [1293, 33], [1306, 67], [1348, 2], [1403, 2], [1417, 6], [1445, 1], [1458, 3], [1472, 7],
        [1486, 16], [1500, 33], [1514, 67], [1555, 1], [1569, 4], [1597, 1], [1624, 1], [1638, 4], [1652, 10], [1666, 22],
        [1680, 46], [1707, 2], [1721, 5], [1735, 12], [1749, 26], [1790, 2], [1804, 6], [1818, 14], [1832, 1], [1846, 3]
    ].forEach(([x, h]) => add(svg, 'rect', { x: x, y: 926 - h, width: 1, height: h, fill: '#00aa00' }));

    ['15703', '13482', '11261', '9041', '6820', '4599', '2378', '158'].forEach((v, i) => {
        add(svg, 'rect', { x: 1848, y: 570 + i * 40, width: 2, height: 1, fill: '#000' });
        add(svg, 'text', { x: 1854, y: 576 + i * 40, textLength: v.length * 7 }, v);
    });

    add(svg, 'text', { x: 35, y: 941 }, '0');
    [3, 6, 9, 12, 15, 18, 21, 23, 26, 29, 32, 35, 38, 41, 44, 47, 49, 52, 55, 58, 61, 64, 67, 70, 73, 75, 78, 81, 84, 87, 90,
        93, 96, 99, 101, 104, 107, 110, 113, 116, 119, 122, 125, 127, 130].forEach((n, i) => {
        add(svg, 'text', { x: 74 + i * 40, y: 941, 'text-anchor': 'end' }, String(n));
    });

    // legend: text, x, width, colour
    [['Баланс', 39, 39, '#0000b0'], ['/', 82, 4, '#404040'], ['Средства', 91, 52, '#00b000'], ['/', 147, 4, '#404040'],
        ['Все тики (наиболее точный метод на основе всех наименьших доступных таймфреймов для генерации каждого тика)', 155, 685, '#000'],
        ['/', 844, 4, '#404040'], ['90.00%', 853, 44, '#404040']
    ].forEach(([t, x, w, c]) => add(svg, 'text', { x: x, y: 562, textLength: w, style: `fill:${c}` }, t));
    add(svg, 'text', { x: 39, y: 868, textLength: 37 }, 'Объем');
}

function drawSignal() {
    const svg = document.getElementById('signal');
    for (let i = 0; i < 8; i++) {
        const split = 12 - i;
        add(svg, 'rect', { x: i * 4, y: 1, width: 3, height: split - 1, fill: '#6b7d0a' });
        add(svg, 'rect', { x: i * 4, y: split + 1, width: 3, height: 16 - split, fill: '#0c3c5c' });
    }
}

drawPrice();
drawBalance();
drawSignal();
```
